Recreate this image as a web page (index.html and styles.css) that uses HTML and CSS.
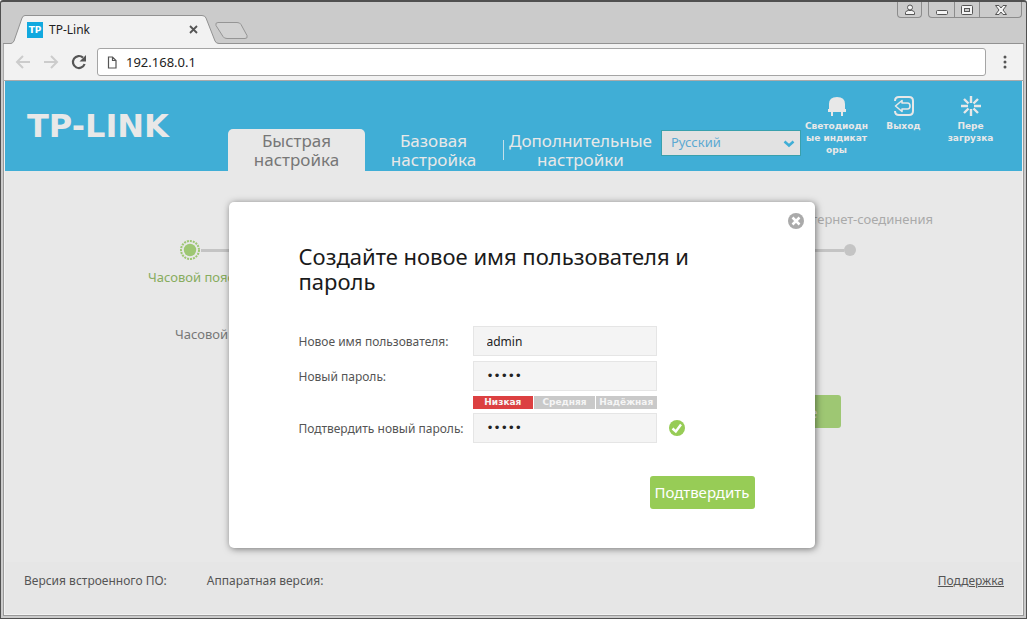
FILE: index.html
```html
<!DOCTYPE html>
<html lang="ru">
<head>
<meta charset="utf-8">
<title>TP-Link</title>
<link rel="stylesheet" href="styles.css">
</head>
<body>
<div class="window">
  <div class="titlebar">
    <div class="tab">
      <svg class="tab-shape" viewBox="0 0 240 29" width="240" height="29" aria-hidden="true">
        <path d="M0 28.500H5Q7 28 8 26L16 3Q17 0.500 19 0.500H196Q199 0.500 200 3L209 26Q210 28.500 213 28.500H240V29H0Z" fill="#f2f2f2"/>
        <path d="M0 28.500H5Q7 28 8 26L16 3Q17 0.500 19 0.500H196Q199 0.500 200 3L209 26Q210 28.500 213 28.500H240" fill="none" stroke="#929292"/>
        <path d="M212 7.500H231Q234 7.500 235 9.500L241 20.500Q242 23.500 239 23.500H221Q218 23.500 217 21.500L210 10.500Q209 7.500 212 7.500Z" fill="#d2d2d2" stroke="#959595"/>
      </svg>
      <span class="favicon">TP</span>
      <span class="tab-title">TP-Link</span>
      <button class="tab-close" aria-label="Закрыть вкладку"><svg width="9" height="9" viewBox="0 0 9 9"><path d="M1 1L8 8M8 1L1 8" stroke="#555" stroke-width="1.800"/></svg></button>
    </div>
    <div class="window-buttons">
      <button class="user-button" aria-label="Пользователь"><svg width="12" height="12" viewBox="0 0 12 12" fill="#f4f4f4" stroke="#555"><path d="M1.500 10.500V8.500Q2 6.500 4.500 6.500H7.500Q10 6.500 10.500 8.500V10.500Z"/><circle cx="6" cy="3.500" r="2.500"/></svg></button>
      <div class="button-group">
        <button aria-label="Свернуть"><svg width="14" height="12" viewBox="0 0 14 12"><rect x="1.500" y="6.500" width="11" height="4" rx="1" fill="#f4f4f4" stroke="#555"/></svg></button>
        <button aria-label="Восстановить"><svg width="14" height="12" viewBox="0 0 14 12" fill="#f4f4f4" stroke="#555"><rect x="1.500" y="1.500" width="11" height="9" rx="1"/><rect x="4.500" y="4.500" width="5" height="3" fill="#ccc"/></svg></button>
        <button class="close-window" aria-label="Закрыть"><svg width="14" height="12" viewBox="0 0 14 12"><path d="M1.500 1.500H5L7 4L9 1.500H12.500L9 6L12.500 10.500H9L7 8L5 10.500H1.500L5 6Z" fill="#f4f4f4" stroke="#555"/></svg></button>
      </div>
    </div>
  </div>

  <div class="toolbar">
    <button class="nav-button" aria-label="Назад"><svg width="16" height="16" viewBox="0 0 16 16"><path d="M15 8H2M8 2L2 8L8 14" fill="none" stroke="#ccc" stroke-width="2"/></svg></button>
    <button class="nav-button" aria-label="Вперёд"><svg width="16" height="16" viewBox="0 0 16 16"><path d="M1 8H14M8 2L14 8L8 14" fill="none" stroke="#ccc" stroke-width="2"/></svg></button>
    <button class="nav-button" aria-label="Обновить"><svg width="16" height="16" viewBox="0 0 16 16"><path d="M13.600 10A6 6 0 1 1 12 3.600" fill="none" stroke="#555" stroke-width="2.200"/><path d="M15 1V7.500H8.500Z" fill="#555"/></svg></button>
    <div class="address">
      <svg width="10" height="13" viewBox="0 0 10 13"><path d="M1.500 1H5.500L9 4.500V12H1.500ZM5.500 1V4.500H9" fill="none" stroke="#555" stroke-width="1.200"/></svg>
      <input type="text" value="192.168.0.1" aria-label="Адресная строка">
    </div>
    <button class="menu-button" aria-label="Меню"><svg width="4" height="14" viewBox="0 0 4 14" fill="#555"><circle cx="2" cy="2" r="1.500"/><circle cx="2" cy="7" r="1.500"/><circle cx="2" cy="12" r="1.500"/></svg></button>
  </div>

  <div class="page">
    <header class="header">
      <div class="logo">TP-LINK</div>
      <nav class="tabs">
        <a class="tab-link active" href="#">Быстрая настройка</a>
        <a class="tab-link" href="#">Базовая настройка</a>
        <a class="tab-link wide" href="#">Дополнительные настройки</a>
      </nav>
      <div class="language">
        <select aria-label="Язык"><option>Русский</option></select>
        <svg class="chevron" width="12" height="8" viewBox="0 0 12 8"><path d="M1.500 1.500L6 5.500L10.500 1.500" fill="none" stroke="#40aed6" stroke-width="2.500"/></svg>
      </div>
      <div class="actions">
        <button class="action">
          <svg width="22" height="22" viewBox="0 0 22 22" fill="#e8e8e8"><path d="M3 14V9Q3 2 11 2Q19 2 19 9V14H20V17H17V21H15V17H7V21H5V17H2V14Z"/></svg>
          <span>Светодиодн<br>ые индикат<br>оры</span>
        </button>
        <button class="action">
          <svg width="22" height="22" viewBox="0 0 22 22" fill="none" stroke="#e8e8e8" stroke-width="2"><path d="M2 6Q2 2 6 2H16Q20 2 20 6V16Q20 20 16 20H6Q2 20 2 16"/><path d="M2.500 11L9 5.500V8H14.500Q17 8 17 11Q17 14 14.500 14H9V16.500Z" stroke-width="1.600" stroke-linejoin="round"/></svg>
          <span>Выход</span>
        </button>
        <button class="action">
          <svg width="22" height="22" viewBox="0 0 22 22" stroke="#e8e8e8" stroke-width="2.400"><path d="M11 1V8M11 14V21M1 11H8M14 11H21M4 4L8.500 8.500M13.500 13.500L18 18M18 4L13.500 8.500M8.500 13.500L4 18"/></svg>
          <span>Пере<br>загрузка</span>
        </button>
      </div>
    </header>

    <main class="content">
      <div class="steps">
        <span class="step-last">Тест интернет-соединения</span>
        <div class="track">
          <svg width="22" height="22" viewBox="0 0 22 22"><circle cx="11" cy="11" r="9" fill="none" stroke="#9ec773" stroke-width="2" stroke-dasharray="2 1"/><circle cx="11" cy="11" r="6.200" fill="#9ec773"/></svg>
          <div class="line"></div>
          <div class="dot"></div>
        </div>
        <span class="step-first">Часовой пояс</span>
      </div>
      <div class="timezone">Часовой пояс:</div>
      <button class="next">Далее</button>
    </main>

    <footer class="footer">
      <span>Версия встроенного ПО:</span>
      <span>Аппаратная версия:</span>
      <a href="#">Поддержка</a>
    </footer>

    <form class="dialog" role="dialog" aria-labelledby="dialog-title">
      <button type="button" class="dialog-close" aria-label="Закрыть"><svg width="16" height="16" viewBox="0 0 16 16"><circle cx="8" cy="8" r="8" fill="#aaa"/><path d="M4.500 4.500L11.500 11.500M11.500 4.500L4.500 11.500" stroke="#fff" stroke-width="2.500"/></svg></button>
      <h1 id="dialog-title">Создайте новое имя пользователя и пароль</h1>
      <div class="fields">
        <label for="user">Новое имя пользователя:</label>
        <input id="user" type="text" value="admin">
        <label for="pass">Новый пароль:</label>
        <input id="pass" type="password" value="admin">
        <div class="strength"><span class="low">Низкая</span><span>Средняя</span><span>Надёжная</span></div>
        <label for="confirm">Подтвердить новый пароль:</label>
        <input id="confirm" type="password" value="admin">
        <svg class="valid" width="16" height="16" viewBox="0 0 16 16"><circle cx="8" cy="8" r="8" fill="#97cc56"/><path d="M3.500 8.500L6.800 11.500L12 4.500" fill="none" stroke="#fff" stroke-width="2.400"/></svg>
      </div>
      <button type="submit" class="submit">Подтвердить</button>
    </form>
  </div>
</div>
</body>
</html>
```
FILE: styles.css
```css
* { box-sizing: border-box; }

body {
  margin: 0;
  font-family: "Noto Sans", Verdana, sans-serif;
  font-size: 13px;
  color: #555;
}

button, input, select { font: inherit; margin: 0; padding: 0; }
button { border: 0; background: none; color: inherit; }
svg { display: block; flex: none; }

.window {
  display: flex;
  flex-direction: column;
  min-height: 100vh;
  padding: 0 2px 2px;
  background: #cbcbcb;
  border: 1px solid #505050;
  border-top-width: 2px;
  border-radius: 3px 3px 0 0;
}

.titlebar {
  display: flex;
  justify-content: space-between;
  height: 42px;
  padding-right: 2px;
  border-bottom: 1px solid #929292;
}
.tab {
  position: relative;
  display: flex;
  align-items: center;
  width: 240px;
  height: 29px;
  margin: 13px 0 0 3px;
  padding-left: 21px;
  font-size: 12px;
  color: #222;
}
.tab-shape { position: absolute; left: 0; top: 0; overflow: visible; }
.favicon {
  position: relative;
  width: 16px;
  margin-right: 6px;
  background: #12a9df;
  color: #fff;
  font: bold 9px/16px "DejaVu Sans", sans-serif;
  text-align: center;
}
.tab-title { position: relative; width: 140px; }
.tab-close { position: relative; }
.window-buttons { display: flex; gap: 6px; align-items: flex-start; }
.window-buttons button {
  display: flex;
  align-items: center;
  justify-content: center;
  width: 25px;
  height: 15px;
}
.window-buttons .user-button, .button-group {
  border: 1px solid #8c8c8c;
  border-top: 0;
  border-radius: 0 0 4px 4px;
  height: 16px;
}
.button-group { display: flex; }
.button-group button + button { border-left: 1px solid #8c8c8c; }
.button-group .close-window { width: 42px; }

.toolbar {
  display: flex;
  align-items: center;
  gap: 12px;
  height: 37px;
  padding: 0 16px 0 11px;
  background: #f2f2f2;
  border: 1px solid #aaa;
  border-top: 0;
}
.address {
  display: flex;
  align-items: center;
  flex: 1;
  gap: 9px;
  height: 28px;
  margin-left: -2px;
  padding-left: 9px;
  background: #fff;
  border: 1px solid #a5a5a5;
  border-radius: 3px;
}
.address input {
  flex: 1;
  border: 0;
  outline: 0;
  background: none;
  color: #222;
}
.menu-button { margin-left: 5px; }

.page {
  position: relative;
  display: flex;
  flex-direction: column;
  flex: 1;
  background: #e8e8e8;
  border: solid #999;
  border-width: 0 1px 1px;
  box-shadow: inset 0 0 0 1px #f2f2f2;
}

.header {
  display: flex;
  height: 90px;
  margin: 0 1px;
  padding-right: 18px;
  background: #40aed6;
  color: #e8e8e8;
}
.logo {
  width: 223px;
  padding: 26px 0 0 22px;
  font: bold 32px/38px "DejaVu Sans", sans-serif;
}
.tabs { display: flex; align-self: flex-end; }
.tab-link {
  width: 137px;
  height: 42px;
  padding: 2px 12px 0;
  border-radius: 5px 5px 0 0;
  color: inherit;
  font-size: 17px;
  line-height: 19px;
  text-align: center;
  text-decoration: none;
}
.tab-link.active { background: #e8e8e8; color: #777; }
.tab-link.wide {
  position: relative;
  width: 155px;
  margin-left: 1px;
  padding: 2px 0 0;
}
.tab-link.wide::before {
  content: "";
  position: absolute;
  left: 0;
  top: 11px;
  height: 20px;
  border-left: 1px solid #c5dfe9;
}
.language { position: relative; align-self: flex-start; margin: 49px auto 0 3px; }
.language select {
  display: block;
  appearance: none;
  width: 140px;
  height: 26px;
  padding: 0 0 2px 9px;
  background: #e2e2e2;
  border: 1px solid #39a0ad;
  border-radius: 0;
  color: #5ba9d2;
}
.chevron { position: absolute; right: 6px; top: 10px; pointer-events: none; }
.actions { display: flex; }
.action {
  display: flex;
  flex-direction: column;
  align-items: center;
  gap: 3px;
  width: 67px;
  padding-top: 14px;
  font: bold 9px/12px "DejaVu Sans", sans-serif;
}

.content { flex: 1; padding: 38px 89px 0 144px; }
.steps { display: grid; line-height: 20px; max-width: 785px; }
.step-last { justify-self: end; color: #aaa; }
.step-first { color: #87ac5e; }
.track { display: flex; align-items: center; margin: 10px 77px 6px 31px; }
.line { flex: 1; height: 3px; background: #c4c4c4; }
.dot { width: 12px; height: 12px; border-radius: 50%; background: #c4c4c4; }
.timezone { margin: 37px 0 0 27px; line-height: 20px; color: #777; }
.next {
  display: block;
  width: 92px;
  height: 33px;
  margin: 51px 0 0 601px;
  border-radius: 3px;
  background: #9ec773;
  color: #e8e8e8;
  font-size: 15px;
}

.footer {
  display: flex;
  gap: 40px;
  height: 52px;
  margin: 0 1px 1px;
  padding: 9px 18px 0 19px;
  background: #e6e6e6;
  font-size: 12px;
  line-height: 20px;
}
.footer a { margin-left: auto; color: inherit; }

.dialog {
  position: absolute;
  left: calc(50% - 285px);
  top: 121px;
  width: 586px;
  padding: 42px 60px 39px 70px;
  background: #fff;
  border-radius: 5px;
  box-shadow: 1px 1px 7px rgba(0, 0, 0, 0.5);
}
.dialog-close { position: absolute; right: 11px; top: 11px; }
.dialog h1 {
  margin: 0 0 32px;
  color: #1a1a1a;
  font-size: 22px;
  line-height: 25px;
  font-weight: normal;
}
.fields {
  display: grid;
  grid-template-columns: 174px 184px auto;
  align-items: center;
  row-gap: 5px;
  font-size: 12px;
  white-space: nowrap;
}
.fields input {
  grid-column: 2;
  width: 100%;
  height: 30px;
  padding: 0 13px;
  border: 1px solid #e5e5e5;
  background: #f4f4f4;
  color: #222;
}
.fields input[type="password"] { font: 12px "DejaVu Sans", sans-serif; }
.fields label { grid-column: 1; }
.strength {
  grid-column: 2;
  display: grid;
  grid-template-columns: repeat(3, 1fr);
  gap: 1px;
  margin-bottom: -1px;
  font: bold 9px/13px "DejaVu Sans", sans-serif;
  text-align: center;
  color: #f5f5f5;
}
.strength span { background: #c9c9c9; }
.strength .low { background: #dc4041; }
.valid { grid-column: 3; margin-left: 12px; }
.submit {
  display: block;
  width: 105px;
  height: 33px;
  margin: 33px 0 0 auto;
  padding-bottom: 2px;
  border-radius: 3px;
  background: #97cc56;
  color: #fff;
  font-size: 15px;
}
```
